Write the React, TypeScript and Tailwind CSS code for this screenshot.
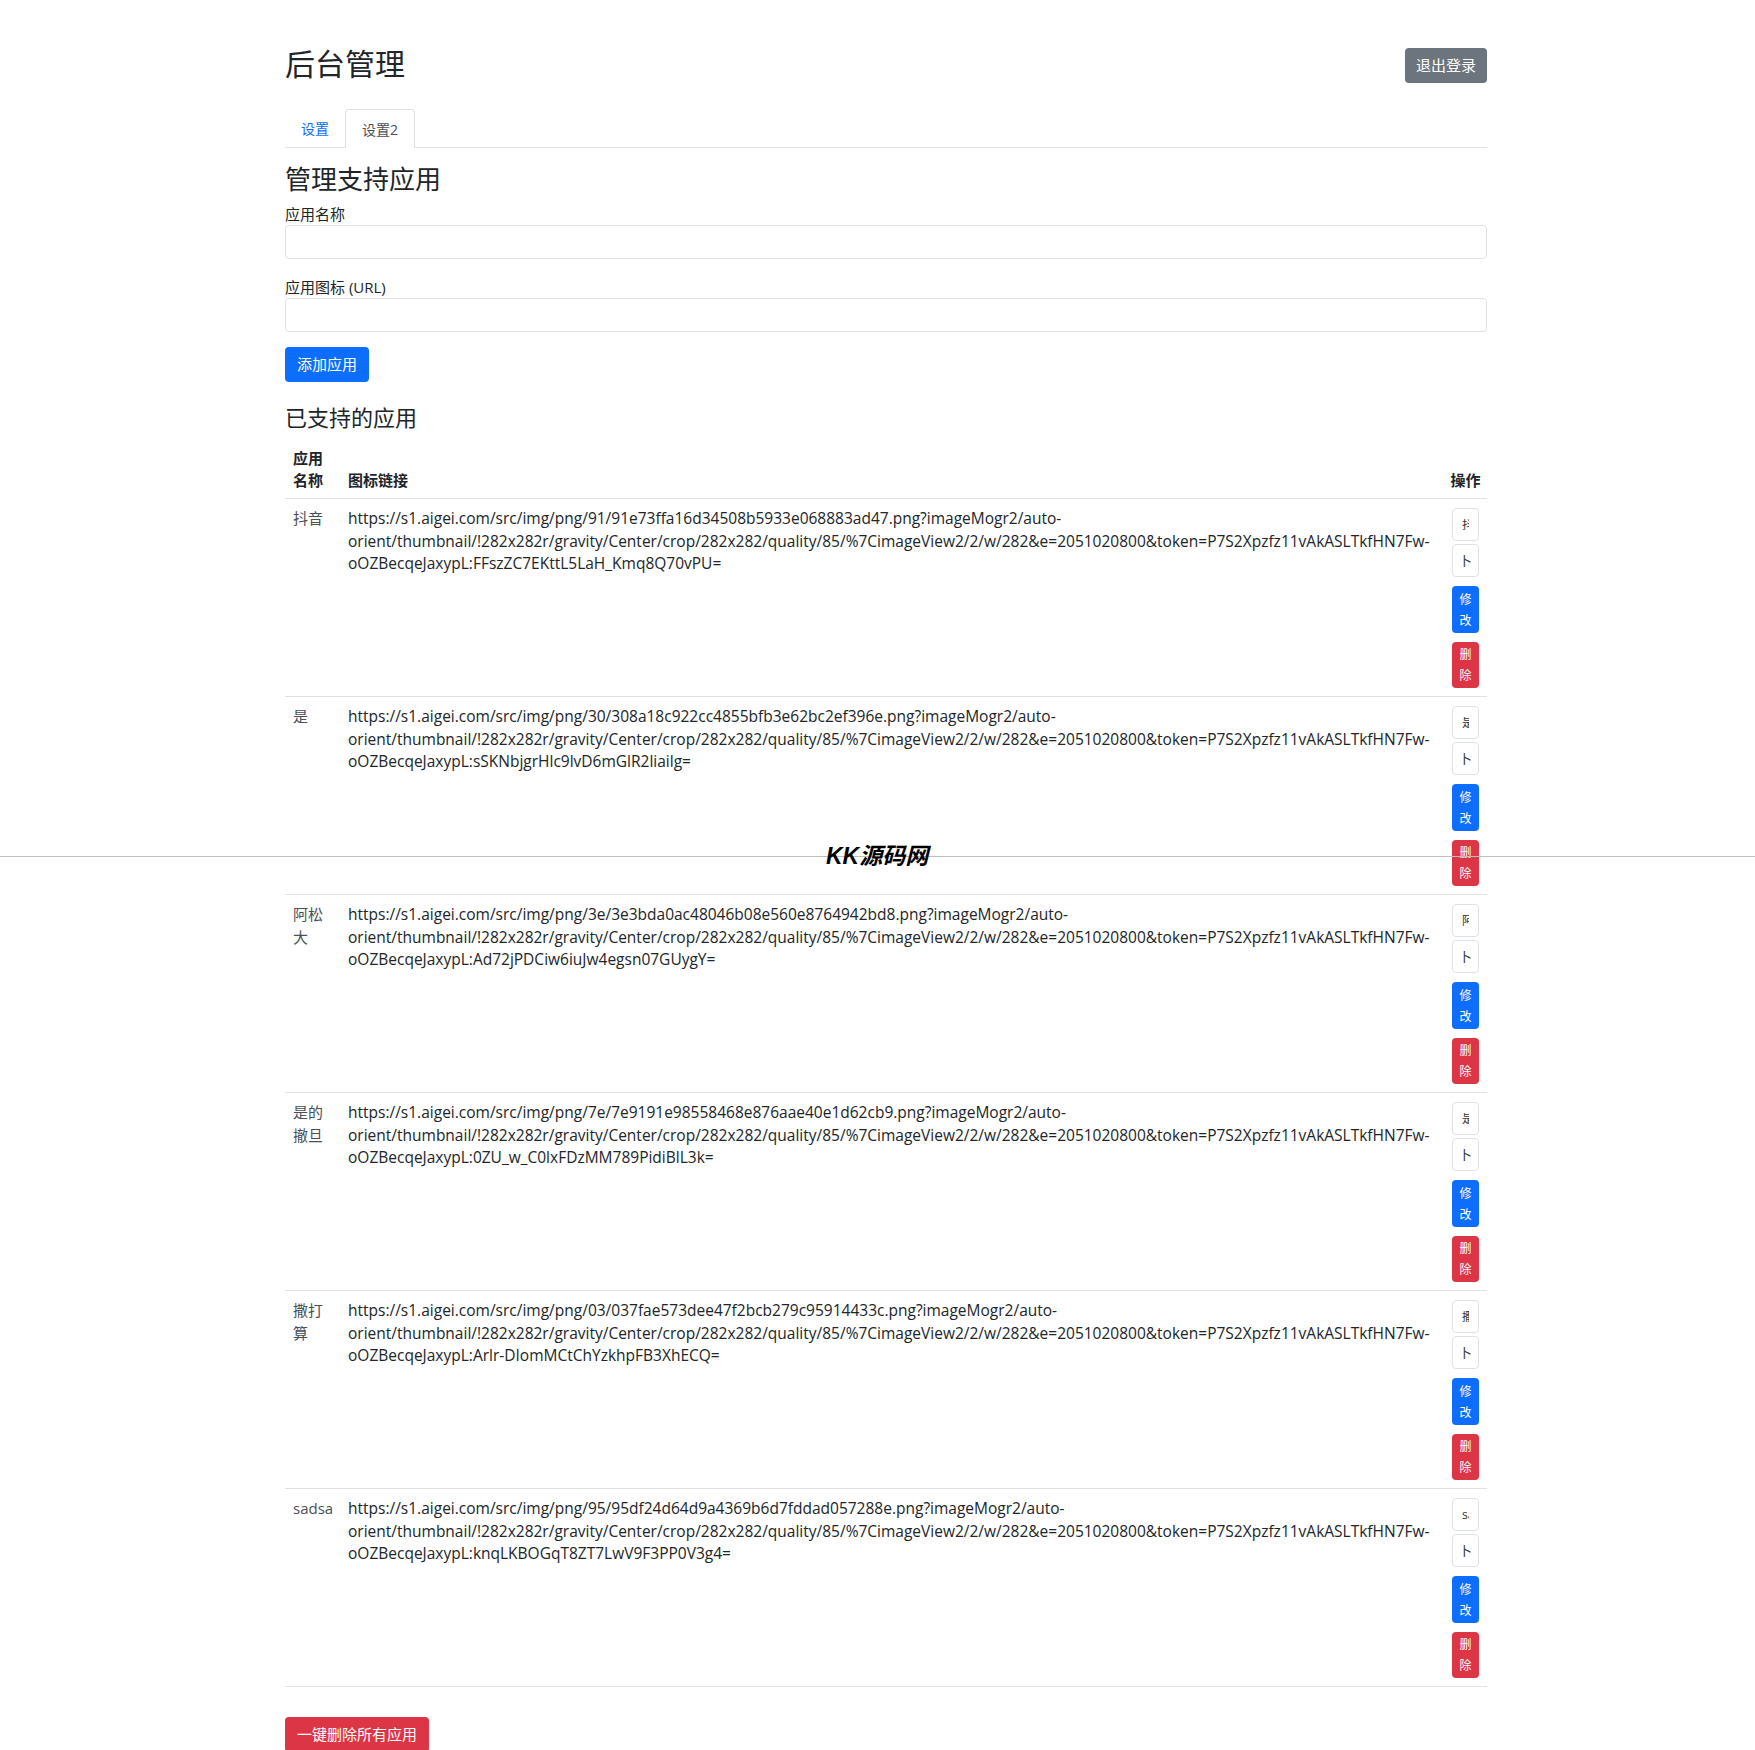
import React from 'react'

type AppItem = {
    name: string
    url: string
}

const q = '?imageMogr2/auto-orient/thumbnail/!282x282r/gravity/Center/crop/282x282/quality/85/%7CimageView2/2/w/282&e=2051020800&token=P7S2Xpzfz11vAkASLTkfHN7Fw-oOZBecqeJaxypL:'

const apps: AppItem[] = [
    { name: '抖音', url: 'https://s1.aigei.com/src/img/png/91/91e73ffa16d34508b5933e068883ad47.png' + q + 'FFszZC7EKttL5LaH_Kmq8Q70vPU=' },
    { name: '是', url: 'https://s1.aigei.com/src/img/png/30/308a18c922cc4855bfb3e62bc2ef396e.png' + q + 'sSKNbjgrHlc9lvD6mGlR2liailg=' },
    { name: '阿松大', url: 'https://s1.aigei.com/src/img/png/3e/3e3bda0ac48046b08e560e8764942bd8.png' + q + 'Ad72jPDCiw6iuJw4egsn07GUygY=' },
    { name: '是的撤旦', url: 'https://s1.aigei.com/src/img/png/7e/7e9191e98558468e876aae40e1d62cb9.png' + q + '0ZU_w_C0lxFDzMM789PidiBlL3k=' },
    { name: '撒打算', url: 'https://s1.aigei.com/src/img/png/03/037fae573dee47f2bcb279c95914433c.png' + q + 'Arlr-DIomMCtChYzkhpFB3XhECQ=' },
    { name: 'sadsa', url: 'https://s1.aigei.com/src/img/png/95/95df24d64d9a4369b6d7fddad057288e.png' + q + 'knqLKBOGqT8ZT7LwV9F3PP0V3g4=' },
]

// long urls only wrap after their hyphens
function UrlText({ url }: { url: string }) {
    const parts = url.split(/(?<=-)/)
    return (
        <>
            {parts.map((p, i) => (
                <span key={i} className="whitespace-nowrap">{p}</span>
            ))}
        </>
    )
}

function AppRow({ app }: { app: AppItem }) {
    return (
        <tr className="border-b border-[#dee2e6] align-top">
            <td className="pl-2 pr-1 pt-2 text-[#495057]">{app.name}</td>
            <td className="px-2 pt-2 text-[15.5px] leading-[22.5px] text-[#212529]">
                <UrlText url={app.url} />
            </td>
            <td className="px-2 pt-[9px] pb-[8px]">
                <div className="flex flex-col items-center">
                    <button className="w-[27px] h-[33px] border border-[#dee2e6] rounded bg-white flex items-center justify-center">
                        <span className="block w-[7px] overflow-hidden whitespace-nowrap text-[12px] leading-none text-[#333]">{app.name}</span>
                    </button>
                    <button className="mt-[3px] w-[27px] h-[33px] border border-[#dee2e6] rounded bg-white flex items-center justify-center text-[13px] leading-none text-[#333]">
                        卜
                    </button>
                    <button className="mt-[9px] w-[27px] h-[47px] rounded bg-[#0d6efd] text-white text-[12px] leading-[21px] flex flex-col items-center justify-center">
                        <span>修</span>
                        <span>改</span>
                    </button>
                    <button className="mt-[9px] w-[27px] h-[46px] rounded bg-[#dc3545] text-white text-[12px] leading-[21px] flex flex-col items-center justify-center">
                        <span>删</span>
                        <span>除</span>
                    </button>
                </div>
            </td>
        </tr>
    )
}

export default function App() {
    return (
        <div className="relative flow-root min-h-[1750px] bg-white font-['Open_Sans','Noto_Sans_CJK_SC',sans-serif] text-[15px] leading-[1.5] text-[#212529]">
            <div className="ml-[285px] w-[1202px] pb-[1px]">
                <div className="mt-[46px] flex items-start justify-between">
                    <h1 className="text-[30px] leading-[36px] font-normal">后台管理</h1>
                    <button className="mt-[2px] h-[35px] px-[11px] rounded bg-[#6c757d] text-white text-[15px]">退出登录</button>
                </div>

                <div className="mt-[26px] h-[39px] flex border-b border-[#dee2e6] text-[14px]">
                    <a className="h-[38px] px-4 flex items-center text-[#0d6efd]">设置</a>
                    <a className="h-[39px] px-4 flex items-center border border-b-0 border-[#dee2e6] rounded-t bg-white text-[#495057]">设置2</a>
                </div>

                <h2 className="mt-[16px] text-[26px] leading-[31px]">管理支持应用</h2>

                <label className="block mt-[9px] leading-[21px]">应用名称</label>
                <input className="block w-full h-[34px] border border-[#dee2e6] rounded px-3" />

                <label className="block mt-[18px] leading-[21px]">应用图标 (URL)</label>
                <input className="block w-full h-[34px] border border-[#dee2e6] rounded px-3" />

                <button className="mt-[15px] h-[35px] px-3 rounded bg-[#0d6efd] text-white">添加应用</button>

                <h3 className="mt-[22px] text-[22px] leading-[26px]">已支持的应用</h3>

                <table className="mt-[9px] w-full table-fixed border-collapse">
                    <colgroup>
                        <col className="w-[55px]" />
                        <col />
                        <col className="w-[43px]" />
                    </colgroup>
                    <thead>
                        <tr className="border-b border-[#dee2e6] align-bottom">
                            <th className="pl-2 pr-1 pt-2 pb-[7px] text-left font-bold leading-[22px]">应用名称</th>
                            <th className="px-2 pt-2 pb-[7px] text-left font-bold leading-[22px]">图标链接</th>
                            <th className="px-1 pt-2 pb-[7px] text-center font-bold leading-[22px] whitespace-nowrap">操作</th>
                        </tr>
                    </thead>
                    <tbody>
                        {apps.map((a, i) => (
                            <AppRow key={i} app={a} />
                        ))}
                    </tbody>
                </table>

                <button className="mt-[30px] h-[35px] px-3 rounded bg-[#dc3545] text-white">一键删除所有应用</button>
            </div>

            {/* watermark */}
            <div className="absolute left-0 right-0 top-[856px] h-px bg-[#bdbdbd]" />
            <div className="absolute left-[826px] top-[841px] text-[23px] leading-[30px] font-bold italic text-black font-['Liberation_Sans','Noto_Sans_CJK_SC',sans-serif]">
                KK源码网
            </div>
        </div>
    )
}
